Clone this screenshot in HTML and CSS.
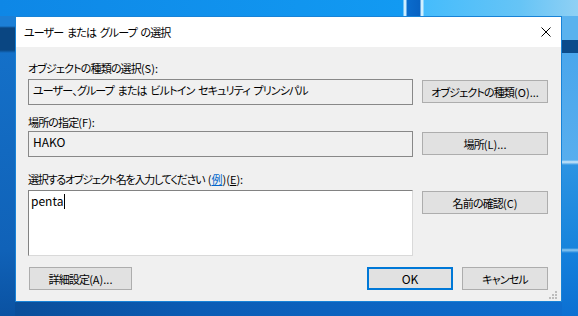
FILE: index.html
```html
<!DOCTYPE html>
<html lang="ja">
<head>
  <meta charset="UTF-8">
  <meta name="viewport" content="width=device-width, initial-scale=1.0">
  <title>ユーザー または グループ の選択</title>
  <link rel="stylesheet" href="styles.css">
</head>
<body>
  <div class="desktop">
    <!-- Dialog window -->
    <div class="dialog">
      <div class="titlebar">
        <span class="title">ユーザー または グループ の選択</span>
        <button class="close-button">
          <svg width="10" height="10" viewBox="0 0 10 10" fill="none" stroke="#000" stroke-width="1">
            <path d="M0.5 0.5L9.5 9.5M9.5 0.5L0.5 9.5"></path>
          </svg>
        </button>
      </div>

      <div class="dialog-body">
        <!-- Object type -->
        <div class="label label-type">オブジェクトの種類の選択<span class="key">(S):</span></div>
        <div class="field-row row-type">
          <div class="field">ユーザー、グループ または ビルトイン セキュリティ プリンシパル</div>
          <button class="btn">オブジェクトの種類<span class="key">(O)...</span></button>
        </div>

        <!-- Location -->
        <div class="label label-place">場所の指定<span class="key">(F):</span></div>
        <div class="field-row row-place">
          <div class="field latin">HAKO</div>
          <button class="btn">場所<span class="key">(L)...</span></button>
        </div>

        <!-- Object names -->
        <div class="label label-names">選択するオブジェクト名を入力してください <span class="key">(<a class="link" href="#">例</a>)(<u>E</u>):</span></div>
        <div class="field-row row-names">
          <div class="names-input latin">penta<span class="caret"></span></div>
          <button class="btn">名前の確認<span class="key">(C)</span></button>
        </div>

        <!-- Buttons -->
        <div class="actions">
          <button class="btn btn-advanced">詳細設定<span class="key">(A)...</span></button>
          <div class="spacer"></div>
          <button class="btn btn-ok latin">OK</button>
          <button class="btn btn-cancel">キャンセル</button>
        </div>
      </div>

      <svg class="grip" width="8" height="8" viewBox="0 0 8 8" fill="#bdbdbd">
        <rect x="6" y="0" width="2" height="2"></rect>
        <rect x="3" y="3" width="2" height="2"></rect>
        <rect x="6" y="3" width="2" height="2"></rect>
        <rect x="0" y="6" width="2" height="2"></rect>
        <rect x="3" y="6" width="2" height="2"></rect>
        <rect x="6" y="6" width="2" height="2"></rect>
      </svg>
    </div>
  </div>
</body>
</html>
```

FILE: styles.css
```css
* {
  margin: 0;
  padding: 0;
  box-sizing: border-box;
  font-family: "Noto Sans CJK JP", "Noto Sans", sans-serif;
  font-feature-settings: "palt";
}

html, body {
  width: 578px;
  height: 316px;
  overflow: hidden;
}

/* Windows 10 wallpaper, roughly */
body {
  background:
    linear-gradient(to right, #0e87e6 0px, #129af2 403px, #cdeeff 404px, #cdeeff 406px, #0a6ccd 407px, #0862c2 420px, #d0f0ff 421px, #d0f0ff 423px, #45bcfc 424px, #66c4f6 520px, #8fd0f4 578px) 0 0 / 578px 16px no-repeat,
    linear-gradient(#5ab2ee 0px, #5ab2ee 40px, #0b4b8b 40px, #0b4b8b 53px, #4aa6ec 53px, #58aeee 160px, #cfe9fb 162px, #2c93e2 165px, #1784dc 248px, #8cc8f0 250px, #1480dc 253px, #0c70d2 316px) right 0 top 0 / 16px 316px no-repeat,
    linear-gradient(#1c7fd6 0px, #1c7fd6 26px, #0a4682 28px, #0a4682 50px, #1470c8 53px, #1062b8 250px, #0a52a2 316px) 0 0 / 15px 316px no-repeat,
    linear-gradient(to right, #0a4d98 0px, #0b5cb5 200px, #0e6ed0 578px);
}

.desktop {
  padding: 16px 16px 0 15px;
}

.dialog {
  position: relative;
  width: 547px;
  height: 286px;
  border: 1px solid #1883d7;
  background-color: #f0f0f0;
  display: flex;
  flex-direction: column;
  font-size: 11px;
  letter-spacing: -0.85px;
  word-spacing: 2px;
  color: #000;
}

.latin {
  font-size: 12px;
  letter-spacing: 0;
}

/* access key part, e.g. (S): */
.key {
  letter-spacing: 0;
}

.titlebar {
  height: 30px;
  background-color: #fff;
  display: flex;
  align-items: center;
  justify-content: space-between;
  padding: 0 10px 0 8px;
}

.close-button {
  background: none;
  border: none;
  width: 10px;
  height: 10px;
  display: flex;
}

.dialog-body {
  flex: 1;
  padding: 0 13px 0 12px;
}

.label {
  height: 16px;
  line-height: 16px;
}

.label-type { margin-top: 13px; }
.label-place { margin-top: 9px; }
.label-names {
  margin-top: 14px;
  letter-spacing: -1.2px;
}

.label-names .key {
  letter-spacing: 0;
}

.link {
  color: #0066cc;
}

.field-row {
  display: flex;
  align-items: flex-start;
  gap: 9px;
}

.row-type { margin-top: 3px; }
.row-place { margin-top: 1px; }
.row-names { margin-top: 3px; }

.field {
  width: 385px;
  height: 26px;
  border: 1px solid #888;
  padding: 2px 4px;
  line-height: 16px;
  white-space: nowrap;
}

.names-input {
  width: 385px;
  height: 66px;
  background-color: #fff;
  border-top: 1px solid #828282;
  border-left: 1px solid #828282;
  border-right: 1px solid #d9d9d9;
  border-bottom: 1px solid #d9d9d9;
  padding: 2px 2px;
  line-height: 16px;
}

.caret {
  display: inline-block;
  width: 1px;
  height: 15px;
  background-color: #000;
  vertical-align: -3px;
  margin-left: 1px;
}

.btn {
  width: 126px;
  height: 23px;
  margin-top: 1px;
  padding: 0;
  background-color: #e1e1e1;
  border: 1px solid #adadad;
  font-size: inherit;
  letter-spacing: inherit;
  word-spacing: inherit;
  color: #000;
  line-height: 16px;
  white-space: nowrap;
}

.btn.latin {
  font-size: 12px;
  letter-spacing: 0;
}

.actions {
  display: flex;
  gap: 9px;
  margin-top: 10px;
}

.spacer {
  flex: 1;
}

.btn-advanced {
  width: 103px;
  margin-left: 1px;
}

.btn-ok,
.btn-cancel {
  width: 86px;
}

.btn-ok {
  border: 2px solid #0078d7;
}

.grip {
  position: absolute;
  right: 4px;
  bottom: 2px;
}
```
